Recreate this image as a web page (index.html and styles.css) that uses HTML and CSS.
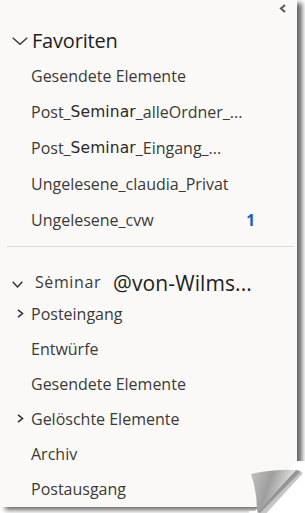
FILE: index.html
```html
<!DOCTYPE html>
<html lang="de">
<head>
<meta charset="utf-8">
<link rel="stylesheet" href="styles.css">
</head>
<body>
<div class="panel">
  <div class="topbar">
    <svg class="collapse" width="8" height="9" viewBox="0 0 8 9"><polyline points="6,1 2,4.5 6,8" fill="none" stroke="#605e5c" stroke-width="2.2"/></svg>
  </div>

  <div class="fav-head">
    <svg class="chev-down" width="16" height="8" viewBox="0 0 16 8"><polyline points="0.7,0.7 8,7.3 15.3,0.7" fill="none" stroke="#323130" stroke-width="1.3"/></svg>
    <span class="head-text">Favoriten</span>
  </div>
  <ul class="list fav">
    <li class="item">Gesendete Elemente</li>
    <li class="item">Post_<span class="sem">Seminar</span>_alleOrdner_...</li>
    <li class="item">Post_<span class="sem">Seminar</span>_Eingang_...</li>
    <li class="item">Ungelesene_claudia_Privat</li>
    <li class="item"><span>Ungelesene_cvw</span><span class="count">1</span></li>
  </ul>

  <div class="divider"></div>

  <div class="acct-head">
    <svg class="chev-small" width="11" height="7" viewBox="0 0 11 7"><polyline points="0.7,0.7 5.5,6 10.3,0.7" fill="none" stroke="#323130" stroke-width="1.4"/></svg>
    <span class="acct-sem">Sėminar</span>
    <span class="head-text acct-mail">@von-Wilms...</span>
  </div>
  <ul class="list acct">
    <li class="item"><svg class="chev-right" width="7" height="9" viewBox="0 0 7 9"><polyline points="1,0.8 5.5,4.5 1,8.2" fill="none" stroke="#323130" stroke-width="1.6"/></svg>Posteingang</li>
    <li class="item">Entwürfe</li>
    <li class="item">Gesendete Elemente</li>
    <li class="item"><svg class="chev-right" width="7" height="9" viewBox="0 0 7 9"><polyline points="1,0.8 5.5,4.5 1,8.2" fill="none" stroke="#323130" stroke-width="1.6"/></svg>Gelöschte Elemente</li>
    <li class="item">Archiv</li>
    <li class="item">Postausgang</li>
  </ul>

  <svg class="curl" width="56" height="52" viewBox="0 0 56 52">
    <defs>
      <linearGradient id="cg" x1="0" y1="0" x2="1" y2="0.3">
        <stop offset="0" stop-color="#c4c4c4"/>
        <stop offset="0.45" stop-color="#9e9e9e"/>
        <stop offset="1" stop-color="#ececec"/>
      </linearGradient>
      <linearGradient id="sg" x1="0" y1="0" x2="1" y2="1">
        <stop offset="0" stop-color="#666" stop-opacity="0.85"/>
        <stop offset="1" stop-color="#777" stop-opacity="0"/>
      </linearGradient>
    </defs>
    <path d="M47 0 L56 0 L56 52 L0 52 L0 50 L6 50 Z" fill="#ffffff"/>
    <path d="M47 9 L54 12 L15 55 L8 52 Z" fill="url(#sg)"/>
    <path d="M47 9 L52 10 L11 52 L8 50 Z" fill="#7a7a7a" opacity="0.6"/>
    <path d="M2 13 Q24 8 47 9 L8 51 Q8 30 2 13 Z" fill="url(#cg)"/>
  </svg>
</div>
</body>
</html>
```

FILE: styles.css
```css
html, body {
  margin: 0;
  padding: 0;
  background: #ffffff;
}

body {
  font-family: "Open Sans", "Noto Sans", sans-serif;
  width: 305px;
  height: 513px;
  overflow: hidden;
}

.panel {
  position: relative;
  width: 297px;
  height: 507px;
  background: #faf9f8;
  box-shadow: 5px 3px 5px rgba(0, 0, 0, 0.6);
  color: #3b3a39;
}

.topbar {
  height: 22px;
  display: flex;
  justify-content: flex-end;
  align-items: flex-start;
  padding-right: 10px;
  box-sizing: border-box;
}

.collapse {
  margin-top: 4px;
}

.fav-head {
  height: 36px;
  display: flex;
  align-items: center;
  padding-left: 12px;
  color: #201f1e;
}

.chev-down {
  margin-right: 4px;
  margin-top: 1px;
}

.head-text {
  font-size: 20px;
  letter-spacing: -0.2px;
  color: #201f1e;
}

.acct-mail {
  font-size: 21px;
  letter-spacing: 0.1px;
}

.list {
  list-style: none;
  margin: 0;
  padding: 0;
}

.item {
  display: flex;
  align-items: center;
  padding-left: 31px;
  font-size: 16px;
  letter-spacing: 0;
  white-space: nowrap;
  position: relative;
}

.fav .item {
  height: 36px;
}

.acct .item {
  height: 35px;
}

.sem {
  font-family: "DejaVu Sans", sans-serif;
  font-size: 15.5px;
  color: #2b2a29;
  letter-spacing: 0.1px;
}

.count {
  margin-left: auto;
  margin-right: 42px;
  color: #1560b8;
  font-weight: 700;
  font-size: 15.5px;
}

.divider {
  margin: 8px 3px 23px 7px;
  height: 1px;
  background: #dcdad8;
}

.acct-head {
  height: 26px;
  display: flex;
  align-items: center;
  padding-left: 12px;
}

.chev-small {
  margin-right: 12px;
  margin-top: 2px;
}

.acct-sem {
  font-size: 16px;
  letter-spacing: 0.6px;
  color: #3b3a39;
  margin-right: 12px;
  margin-top: -3px;
}

.chev-right {
  position: absolute;
  left: 17px;
  top: 13px;
}

.curl {
  position: absolute;
  right: -8px;
  bottom: -6px;
}
```
